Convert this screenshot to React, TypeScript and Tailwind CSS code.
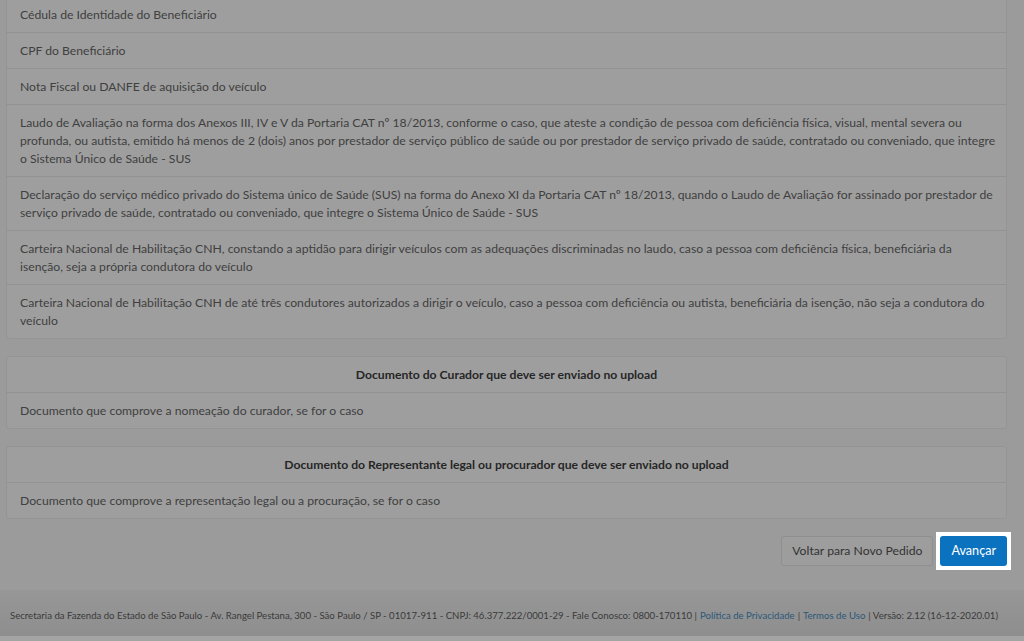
import React from 'react';

const documentos = [
  'Cédula de Identidade do Beneficiário',
  'CPF do Beneficiário',
  'Nota Fiscal ou DANFE de aquisição do veículo',
  'Laudo de Avaliação na forma dos Anexos III, IV e V da Portaria CAT nº 18/2013, conforme o caso, que ateste a condição de pessoa com deficiência física, visual, mental severa ou profunda, ou autista, emitido há menos de 2 (dois) anos por prestador de serviço público de saúde ou por prestador de serviço privado de saúde, contratado ou conveniado, que integre o Sistema Único de Saúde - SUS',
  'Declaração do serviço médico privado do Sistema único de Saúde (SUS) na forma do Anexo XI da Portaria CAT nº 18/2013, quando o Laudo de Avaliação for assinado por prestador de serviço privado de saúde, contratado ou conveniado, que integre o Sistema Único de Saúde - SUS',
  'Carteira Nacional de Habilitação CNH, constando a aptidão para dirigir veículos com as adequações discriminadas no laudo, caso a pessoa com deficiência física, beneficiária da isenção, seja a própria condutora do veículo',
  'Carteira Nacional de Habilitação CNH de até três condutores autorizados a dirigir o veículo, caso a pessoa com deficiência ou autista, beneficiária da isenção, não seja a condutora do veículo',
];

function Panel({ title, rows, className = '' }: { title?: string; rows: string[]; className?: string }) {
  return (
    <div className={`border border-[#949494] rounded-[3px] bg-[#9e9e9e] ${className}`}>
      {title && (
        <div className="px-[13px] pt-[9px] pb-[8px] text-center text-[12.2px] leading-[18px] font-bold text-[#262626]">
          {title}
        </div>
      )}
      {rows.map((row, i) => (
        <div
          key={i}
          className={`pl-[13px] pr-[9px] pt-[9px] pb-[8px] text-[12.2px] leading-[18px] text-[#404040] ${
            i > 0 || title ? 'border-t border-[#929292]' : ''
          }`}
        >
          {row}
        </div>
      ))}
    </div>
  );
}

export default function App() {
  return (
    <div
      className="w-[1024px] h-[641px] overflow-hidden bg-[#9b9b9b] flex flex-col"
      style={{ fontFamily: 'Lato, "Open Sans", sans-serif' }}
    >
      <div className="flex-1 overflow-hidden pl-[6px] pr-[17px] flex flex-col">
        <Panel rows={documentos} className="-mt-[4px] rounded-t-none" />

        <Panel
          className="mt-[17px]"
          title="Documento do Curador que deve ser enviado no upload"
          rows={['Documento que comprove a nomeação do curador, se for o caso']}
        />

        <Panel
          className="mt-[17px]"
          title="Documento do Representante legal ou procurador que deve ser enviado no upload"
          rows={['Documento que comprove a representação legal ou a procuração, se for o caso']}
        />

        <div className="mt-[13px] flex justify-end items-center gap-[3px] -mr-[4px]">
          <button className="h-[30px] px-[10px] border border-[#8f8f8f] rounded-[3px] bg-[#9d9d9d] text-[12.2px] text-[#333]">
            Voltar para Novo Pedido
          </button>
          <div className="p-[4px] bg-white">
            <button className="h-[30px] px-[11px] rounded-[3px] bg-[#0b72bf] text-[12.6px] text-white">
              Avançar
            </button>
          </div>
        </div>
      </div>

      <div className="h-[46px] bg-gradient-to-b from-[#979797] to-[#8e8e8e] flex items-center pt-[6px] pl-[10px] text-[9.6px] text-[#3a3a3a] whitespace-nowrap">
        Secretaria da Fazenda do Estado de São Paulo - Av. Rangel Pestana, 300 - São Paulo / SP - 01017-911 - CNPJ: 46.377.222/0001-29 - Fale Conosco: 0800-170110 |{' '}
        <a className="mx-[3px] text-[#2c5878]">Política de Privacidade</a>|
        <a className="mx-[3px] text-[#2c5878]">Termos de Uso</a>| Versão: 2.12 (16-12-2020.01)
      </div>
      <div className="h-[5px] bg-[#a4a4a4]" />
    </div>
  );
}
